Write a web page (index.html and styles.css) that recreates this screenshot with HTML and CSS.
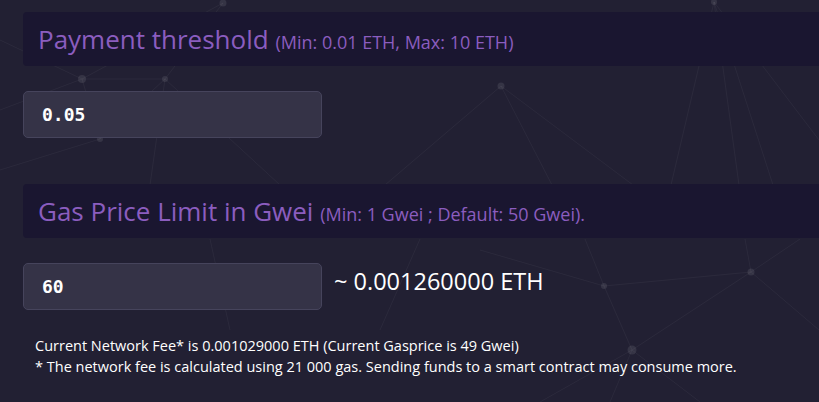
FILE: index.html
```html
<!DOCTYPE html>
<html lang="en">
<head>
  <meta charset="UTF-8" />
  <meta name="viewport" content="width=device-width, initial-scale=1.0" />
  <title>Settings</title>
  <link rel="stylesheet" href="styles.css">
</head>
<body>
  <svg class="network" width="819" height="402" viewBox="0 0 819 402">
    <g class="links">
      <line x1="223" y1="3" x2="82" y2="79" />
      <line x1="223" y1="3" x2="165" y2="79" />
      <line x1="0" y1="40" x2="82" y2="79" />
      <line x1="82" y1="79" x2="165" y2="79" />
      <line x1="82" y1="79" x2="100" y2="139" />
      <line x1="165" y1="79" x2="100" y2="139" />
      <line x1="165" y1="79" x2="280" y2="185" />
      <line x1="165" y1="79" x2="150" y2="185" />
      <line x1="100" y1="139" x2="0" y2="170" />
      <line x1="82" y1="79" x2="0" y2="110" />
      <line x1="501" y1="86" x2="385" y2="185" />
      <line x1="501" y1="86" x2="552" y2="185" />
      <line x1="501" y1="86" x2="633" y2="185" />
      <line x1="714" y1="2" x2="671" y2="185" />
      <line x1="714" y1="2" x2="739" y2="185" />
      <line x1="714" y1="2" x2="773" y2="185" />
      <line x1="714" y1="2" x2="819" y2="140" />
      <line x1="604" y1="286" x2="751" y2="272" />
      <line x1="604" y1="286" x2="632" y2="350" />
      <line x1="751" y1="272" x2="632" y2="350" />
      <line x1="751" y1="272" x2="819" y2="330" />
      <line x1="751" y1="272" x2="745" y2="239" />
      <line x1="751" y1="272" x2="800" y2="239" />
      <line x1="604" y1="286" x2="585" y2="239" />
      <line x1="604" y1="286" x2="480" y2="250" />
      <line x1="632" y1="350" x2="540" y2="402" />
      <line x1="632" y1="350" x2="700" y2="402" />
      <line x1="632" y1="350" x2="610" y2="402" />
      <line x1="420" y1="239" x2="380" y2="330" />
      <line x1="210" y1="239" x2="230" y2="330" />
    </g>
    <g class="nodes">
      <circle cx="223" cy="3" r="3.5" />
      <circle cx="82" cy="79" r="4" />
      <circle cx="165" cy="79" r="3" />
      <circle cx="100" cy="139" r="3" />
      <circle cx="501" cy="86" r="3.5" />
      <circle cx="714" cy="2" r="3" />
      <circle cx="604" cy="286" r="3" />
      <circle cx="751" cy="272" r="3.5" />
      <circle cx="632" cy="350" r="4.5" />
    </g>
  </svg>

  <div class="page">
    <div class="section-title">
      <h2>Payment threshold <small>(Min: 0.01 ETH, Max: 10 ETH)</small></h2>
    </div>
    <div class="field-row">
      <input class="field" type="text" value="0.05" />
    </div>

    <div class="section-title">
      <h2>Gas Price Limit in Gwei <small>(Min: 1 Gwei ; Default: 50 Gwei).</small></h2>
    </div>
    <div class="field-row">
      <input class="field" type="text" value="60" />
      <span class="estimate">~ 0.001260000 ETH</span>
    </div>

    <div class="note">
      <p>Current Network Fee* is 0.001029000 ETH (Current Gasprice is 49 Gwei)</p>
      <p>* The network fee is calculated using 21 000 gas. Sending funds to a smart contract may consume more.</p>
    </div>
  </div>
</body>
</html>
```

FILE: styles.css
```css
body {
  font-family: "Open Sans", sans-serif;
  background-color: #222033;
  color: white;
  margin: 0;
  padding: 0;
  overflow: hidden;
}
.network {
  position: absolute;
  top: 0;
  left: 0;
}
.network line {
  stroke: rgba(255, 255, 255, 0.045);
  stroke-width: 1;
}
.network circle {
  fill: rgba(255, 255, 255, 0.09);
}
.page {
  position: relative;
  padding: 12px 0 0 23px;
}
.section-title {
  background-color: #1a1630;
  border-radius: 4px 0 0 4px;
  height: 54px;
  padding-left: 15px;
  display: flex;
  align-items: center;
  margin-bottom: 25px;
}
.section-title h2 {
  margin: 0;
  font-size: 26px;
  font-weight: normal;
  color: #8b5dbf;
  white-space: nowrap;
}
.section-title small {
  font-size: 18px;
}
.field-row {
  display: flex;
  align-items: center;
  gap: 12px;
  margin-bottom: 46px;
}
.field {
  box-sizing: border-box;
  width: 299px;
  height: 47px;
  padding: 0 18px;
  background-color: #353347;
  border: 1px solid #46445c;
  border-radius: 5px;
  color: white;
  font-family: "DejaVu Sans Mono", monospace;
  font-weight: bold;
  font-size: 18px;
}
.estimate {
  font-size: 23.5px;
  padding-bottom: 12px;
}
.note {
  margin-top: -21px;
  padding-left: 12px;
  font-size: 14.5px;
  line-height: 21px;
}
.note p {
  margin: 0;
}
```
